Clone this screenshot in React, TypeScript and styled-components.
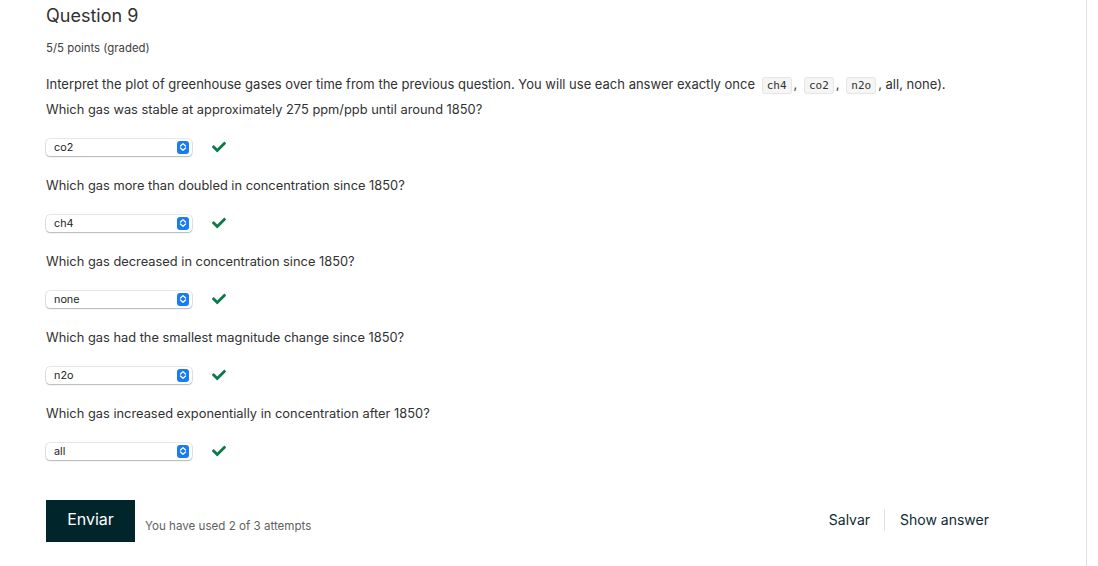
import React from "react";
import styled, { createGlobalStyle } from "styled-components";
import { FaCheck } from "react-icons/fa";

const Global = createGlobalStyle`
  html, body { margin: 0; padding: 0; background: #fff; }
  body { font-family: Inter, "Noto Sans", "Liberation Sans", sans-serif; color: #313131; }
`;

const Page = styled.div`
  width: 1087px;
  height: 566px;
  box-sizing: border-box;
  border-right: 1px solid #e2e2e2;
  padding: 4px 0 0 46px;
`;

const Title = styled.h3`
  margin: 0;
  font-size: 18px;
  font-weight: 400;
  line-height: 24px;
  color: #313131;
`;

const Points = styled.div`
  margin-top: 13px;
  font-size: 11.4px;
  line-height: 14px;
  color: #414141;
`;

const Intro = styled.p`
  margin: 20px 0 0;
  font-size: 13px;
  line-height: 18px;
  color: #313131;
`;

const Code = styled.code`
  font-family: "DejaVu Sans Mono", "Liberation Mono", monospace;
  font-size: 11px;
  background: #f5f5f5;
  border: 1px solid #e6e6e6;
  border-radius: 3px;
  padding: 1px 4px;
  margin: 0 2px 0 3px;
  color: #313131;
`;

const Block = styled.div`
  display: flex;
  flex-direction: column;
`;

const QText = styled.p<{ $first?: boolean }>`
  margin: ${(p) => (p.$first ? "6px" : "0")} 0 0;
  font-size: 12.85px;
  line-height: 18px;
  color: #313131;
`;

const Row = styled.div`
  display: flex;
  align-items: center;
  gap: 19px;
  margin: 19px 0 21px;
  height: 18px;
`;

const SelectBox = styled.div`
  width: 146px;
  height: 17px;
  box-sizing: border-box;
  border-radius: 4px;
  background: #fff;
  box-shadow: 0 0 0 0.5px rgba(0,0,0,0.18), 0 1px 1.5px rgba(0,0,0,0.22);
  display: flex;
  align-items: center;
  justify-content: space-between;
  padding: 0 3px 0 8px;
  font-size: 10.8px;
  color: #222;
`;

const Stepper = styled.span`
  width: 12px;
  height: 13px;
  border-radius: 3px;
  background: #1a7cf5;
  display: flex;
  align-items: center;
  justify-content: center;
`;

const CheckMark = styled(FaCheck)`
  width: 16px;
  height: 14px;
  color: #0b7a48;
`;

const Footer = styled.div`
  display: flex;
  align-items: center;
  margin-top: 19px;
  width: 943px;
`;

const Submit = styled.button`
  width: 89px;
  height: 42px;
  border: none;
  background: #00262b;
  color: #fff;
  font-family: inherit;
  font-size: 16px;
  padding: 0 0 4px;
`;

const Attempts = styled.span`
  margin-left: 10px;
  margin-top: 9px;
  font-size: 11.6px;
  color: #5f5f5f;
`;

const Actions = styled.div`
  margin-left: auto;
  display: flex;
  align-items: center;
  margin-bottom: 2px;
`;

const Action = styled.span<{ $divider?: boolean }>`
  font-size: 14px;
  color: #0e2a33;
  padding: 0 ${(p) => (p.$divider ? "14px" : "0")};
  line-height: 22px;
  ${(p) => (p.$divider ? "border-right: 1px solid #dde3e6; margin-right: 15px;" : "")}
`;

const items = [
  { q: "Which gas was stable at approximately 275 ppm/ppb until around 1850?", a: "co2" },
  { q: "Which gas more than doubled in concentration since 1850?", a: "ch4" },
  { q: "Which gas decreased in concentration since 1850?", a: "none" },
  { q: "Which gas had the smallest magnitude change since 1850?", a: "n2o" },
  { q: "Which gas increased exponentially in concentration after 1850?", a: "all" },
];

const Select = ({ value }: { value: string }) => (
  <SelectBox>
    <span>{value}</span>
    <Stepper>
      <svg width="8" height="10" viewBox="0 0 8 10">
        <path d="M1.5 4 L4 1.6 L6.5 4" fill="none" stroke="#fff" strokeWidth="1.3" strokeLinecap="round" strokeLinejoin="round" />
        <path d="M1.5 6 L4 8.4 L6.5 6" fill="none" stroke="#fff" strokeWidth="1.3" strokeLinecap="round" strokeLinejoin="round" />
      </svg>
    </Stepper>
  </SelectBox>
);

export default function App() {
  return (
    <>
      <Global />
      <Page>
        <Title>Question 9</Title>
        <Points>5/5 points (graded)</Points>
        <Intro>
          Interpret the plot of greenhouse gases over time from the previous question. You will use each answer exactly once{" "}
          <Code>ch4</Code>, <Code>co2</Code>, <Code>n2o</Code>, all, none).
        </Intro>
        <Block>
          {items.map((it, i) => (
            <React.Fragment key={it.a}>
              <QText $first={i === 0}>{it.q}</QText>
              <Row>
                <Select value={it.a} />
                <CheckMark />
              </Row>
            </React.Fragment>
          ))}
        </Block>
        <Footer>
          <Submit>Enviar</Submit>
          <Attempts>You have used 2 of 3 attempts</Attempts>
          <Actions>
            <Action $divider>Salvar</Action>
            <Action>Show answer</Action>
          </Actions>
        </Footer>
      </Page>
    </>
  );
}
